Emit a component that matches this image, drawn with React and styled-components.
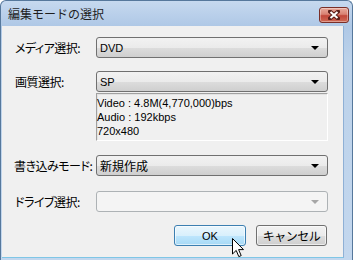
import styled, {createGlobalStyle} from "styled-components";

const GlobalStyle = createGlobalStyle`
  html, body {
    margin: 0;
    padding: 0;
    background: #ffffff;
  }
  body {
    font-family: "Liberation Sans", "Noto Sans CJK JP", sans-serif;
  }
`;

const Frame = styled.div`
  position: relative;
  width: 353px;
  height: 260px;
  box-sizing: border-box;
  display: flex;
  flex-direction: column;
  border: 1px solid #56789c;
  border-bottom: none;
  border-radius: 6px 6px 0 0;
  padding: 0 8px 2px 1px;
  background: linear-gradient(to bottom, #c6d9ef 0px, #afc8e6 25px, #bcd2ea 60px, #c3d7ee 100%);
  overflow: hidden;
`;

const TitleBar = styled.div`
  height: 25px;
  display: flex;
  align-items: center;
  justify-content: space-between;
  padding-left: 6px;
  margin-right: -5px;
`;

const Title = styled.span`
  font-family: "Noto Sans CJK JP", sans-serif;
  font-size: 12px;
  color: #1e1e1e;
`;

const CloseButton = styled.div`
  width: 30px;
  height: 16px;
  box-sizing: border-box;
  margin-top: 2px;
  border: 1px solid #7a2f28;
  border-radius: 3px;
  display: flex;
  align-items: center;
  justify-content: center;
  background: linear-gradient(to bottom, #e8aa9c 0%, #d98273 45%, #c2473a 55%, #cf6a55 100%);
  box-shadow: inset 0 0 0 1px rgba(255, 255, 255, 0.35);
`;

const Body = styled.div`
  flex: 1;
  display: flex;
  flex-direction: column;
  background: #f0f0f0;
  border-right: 1px solid #8fb0d5;
  border-bottom: 1px solid #7fc6e6;
  padding: 11px 15px 0 13px;
`;

const Row = styled.div`
  display: grid;
  grid-template-columns: 81px 1fr;
  align-items: center;
  margin-top: ${(props) => props.$gap || 0}px;
`;

const Label = styled.span`
  font-family: "Noto Sans CJK JP", sans-serif;
  font-feature-settings: "palt";
  font-size: 12px;
  letter-spacing: -0.5px;
  color: #000000;
  margin-left: ${(props) => props.$shift || 0}px;
  white-space: nowrap;
`;

const Select = styled.div`
  height: 21px;
  box-sizing: border-box;
  display: flex;
  align-items: center;
  justify-content: space-between;
  padding: 0 8px 0 3px;
  border: 1px solid ${(props) => (props.$disabled ? "#adb2b5" : "#707070")};
  border-radius: 3px;
  background: ${(props) =>
    props.$disabled
      ? "#f4f4f4"
      : "linear-gradient(to bottom, #f2f2f2 0%, #ebebeb 50%, #dddddd 51%, #cfcfcf 100%)"};
  font-size: ${(props) => (props.$jp ? 12 : 11)}px;
  font-family: ${(props) =>
    props.$jp ? '"Noto Sans CJK JP", sans-serif' : '"Liberation Sans", sans-serif'};
  color: #000000;
`;

const Arrow = styled.span`
  width: 0;
  height: 0;
  border-left: 4px solid transparent;
  border-right: 4px solid transparent;
  border-top: 4px solid ${(props) => (props.$disabled ? "#a6a6a6" : "#000000")};
`;

const InfoBox = styled.div`
  height: 48px;
  box-sizing: border-box;
  border-top: 1px solid #a0a0a0;
  border-left: 1px solid #a0a0a0;
  border-right: 1px solid #ffffff;
  border-bottom: 1px solid #ffffff;
  box-shadow: 1px 1px 0 #e3e3e3 inset;
  padding: 2px 0 0 0;
  font-family: "Liberation Sans", sans-serif;
  font-size: 11px;
  line-height: 14px;
  color: #000000;
`;

const ButtonRow = styled.div`
  display: flex;
  justify-content: flex-end;
  gap: 10px;
  margin-top: 13px;
  margin-right: 1px;
`;

const Button = styled.div`
  width: ${(props) => props.$w}px;
  height: 21px;
  box-sizing: border-box;
  display: flex;
  align-items: center;
  justify-content: center;
  border: 1px solid ${(props) => (props.$hover ? "#3c7fb1" : "#707070")};
  border-radius: 3px;
  background: ${(props) =>
    props.$hover
      ? "linear-gradient(to bottom, #eaf6fd 0%, #d9f0fc 50%, #bee6fd 51%, #a7d9f5 100%)"
      : "linear-gradient(to bottom, #f2f2f2 0%, #ebebeb 50%, #dddddd 51%, #cfcfcf 100%)"};
  box-shadow: inset 0 0 0 1px rgba(255, 255, 255, 0.6);
  font-family: ${(props) =>
    props.$jp ? '"Noto Sans CJK JP", sans-serif' : '"Liberation Sans", sans-serif'};
  font-size: ${(props) => (props.$jp ? 12 : 11)}px;
  letter-spacing: ${(props) => (props.$jp ? -0.5 : 0)}px;
  color: #000000;
`;

const Cursor = styled.svg`
  position: absolute;
  left: 231px;
  top: 237px;
`;

export default function App() {
    return <>
        <GlobalStyle/>
        <Frame>
            <TitleBar>
                <Title>編集モードの選択</Title>
                <CloseButton>
                    <svg width="12" height="10" viewBox="0 0 12 10">
                        <path d="M2 1.5 L10 8.5 M10 1.5 L2 8.5" stroke="#5a1f1a" strokeWidth="4" strokeLinecap="square"/>
                        <path d="M2.5 2 L9.5 8 M9.5 2 L2.5 8" stroke="#ffffff" strokeWidth="2"/>
                    </svg>
                </CloseButton>
            </TitleBar>
            <Body>
                <Row>
                    <Label>メディア選択:</Label>
                    <Select>DVD<Arrow/></Select>
                </Row>
                <Row $gap={13}>
                    <Label>画質選択:</Label>
                    <Select>SP<Arrow/></Select>
                </Row>
                <Row $gap={1}>
                    <span/>
                    <InfoBox>
                        Video : 4.8M(4,770,000)bps<br/>
                        Audio : 192kbps<br/>
                        720x480
                    </InfoBox>
                </Row>
                <Row $gap={14}>
                    <Label $shift={-1}>書き込みモード:</Label>
                    <Select $jp>新規作成<Arrow/></Select>
                </Row>
                <Row $gap={15}>
                    <Label>ドライブ選択:</Label>
                    <Select $disabled><span/><Arrow $disabled/></Select>
                </Row>
                <ButtonRow>
                    <Button $w={72} $hover>OK</Button>
                    <Button $w={71} $jp>キャンセル</Button>
                </ButtonRow>
            </Body>
            <Cursor width="13" height="20" viewBox="0 0 13 20">
                <path d="M0.5 0.5 L0.5 16 L4.2 12.4 L6.8 18.6 L9.2 17.6 L6.6 11.6 L11.5 11.6 Z"
                      fill="#ffffff" stroke="#000000" strokeWidth="1" strokeLinejoin="miter"/>
            </Cursor>
        </Frame>
    </>;
}
